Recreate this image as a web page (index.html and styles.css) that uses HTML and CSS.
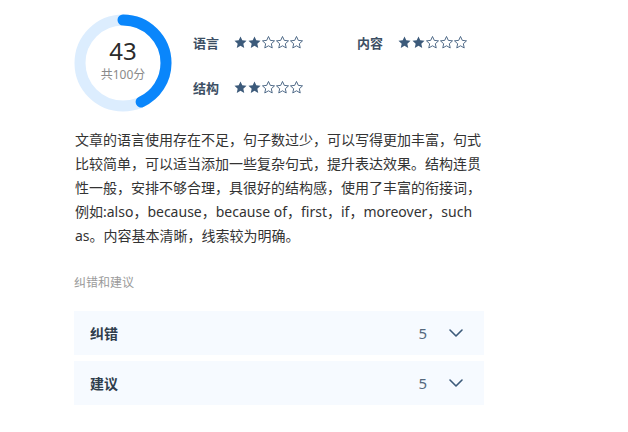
FILE: index.html
```html
<!DOCTYPE html>
<html lang="zh-CN">
<head>
<meta charset="utf-8">
<link rel="stylesheet" href="styles.css">
</head>
<body>
<svg width="0" height="0" class="defs">
  <defs>
    <path id="star" d="M12 1.8l3 6.6 7.2.8-5.4 4.9 1.5 7.1L12 17.6l-6.3 3.6 1.5-7.1L1.8 9.2 9 8.4z"/>
  </defs>
</svg>
<div class="page">
  <div class="top">
    <div class="score">
      <svg class="ring" width="98" height="98" viewBox="0 0 98 98">
        <circle cx="49" cy="49" r="43" fill="none" stroke="#dcedfe" stroke-width="11"/>
        <circle cx="49" cy="49" r="43" fill="none" stroke="#0a86fb" stroke-width="11" stroke-linecap="round" stroke-dasharray="116.2 400" transform="rotate(-90 49 49)"/>
      </svg>
      <div class="score-text">
        <div class="num">43</div>
        <div class="total">共100分</div>
      </div>
    </div>
    <div class="ratings">
      <div class="rating">
        <span class="label">语言</span>
        <span class="stars">
          <svg viewBox="1 1 22 22" class="on"><use href="#star"/></svg><svg viewBox="1 1 22 22" class="on"><use href="#star"/></svg><svg viewBox="1 1 22 22" class="off"><use href="#star"/></svg><svg viewBox="1 1 22 22" class="off"><use href="#star"/></svg><svg viewBox="1 1 22 22" class="off"><use href="#star"/></svg>
        </span>
      </div>
      <div class="rating">
        <span class="label">内容</span>
        <span class="stars">
          <svg viewBox="1 1 22 22" class="on"><use href="#star"/></svg><svg viewBox="1 1 22 22" class="on"><use href="#star"/></svg><svg viewBox="1 1 22 22" class="off"><use href="#star"/></svg><svg viewBox="1 1 22 22" class="off"><use href="#star"/></svg><svg viewBox="1 1 22 22" class="off"><use href="#star"/></svg>
        </span>
      </div>
      <div class="rating">
        <span class="label">结构</span>
        <span class="stars">
          <svg viewBox="1 1 22 22" class="on"><use href="#star"/></svg><svg viewBox="1 1 22 22" class="on"><use href="#star"/></svg><svg viewBox="1 1 22 22" class="off"><use href="#star"/></svg><svg viewBox="1 1 22 22" class="off"><use href="#star"/></svg><svg viewBox="1 1 22 22" class="off"><use href="#star"/></svg>
        </span>
      </div>
    </div>
  </div>
  <p class="comment">文章的语言使用存在不足，句子数过少，可以写得更加丰富，句式比较简单，可以适当添加一些复杂句式，提升表达效果。结构连贯性一般，安排不够合理，具很好的结构感，使用了丰富的衔接词，例如:also，because，because of，first，if，moreover，such as。内容基本清晰，线索较为明确。</p>
  <div class="section-title">纠错和建议</div>
  <div class="panels">
    <div class="panel">
      <span class="panel-name">纠错</span>
      <span class="panel-count">5</span>
      <svg class="chev" width="14" height="8" viewBox="0 0 14 8"><path d="M1 1l6 6 6-6" fill="none" stroke="#3c5a7a" stroke-width="1.6" stroke-linecap="round" stroke-linejoin="round"/></svg>
    </div>
    <div class="panel">
      <span class="panel-name">建议</span>
      <span class="panel-count">5</span>
      <svg class="chev" width="14" height="8" viewBox="0 0 14 8"><path d="M1 1l6 6 6-6" fill="none" stroke="#3c5a7a" stroke-width="1.6" stroke-linecap="round" stroke-linejoin="round"/></svg>
    </div>
  </div>
</div>
</body>
</html>
```

FILE: styles.css
```css
html, body {
  margin: 0;
  padding: 0;
  background: #ffffff;
}
body {
  font-family: "Noto Sans", "Noto Sans CJK SC", sans-serif;
  color: #333333;
}
.defs {
  position: absolute;
  width: 0;
  height: 0;
}
.page {
  margin-left: 74px;
  width: 412px;
  padding-top: 14px;
}
.top {
  display: flex;
  align-items: flex-start;
}
.score {
  position: relative;
  width: 98px;
  height: 98px;
  flex: none;
}
.ring {
  display: block;
}
.score-text {
  position: absolute;
  inset: 0;
  display: flex;
  flex-direction: column;
  align-items: center;
  justify-content: center;
}
.num {
  font-size: 24px;
  line-height: 28px;
  color: #2b2b2b;
  margin-top: -6px;
}
.total {
  font-size: 12px;
  line-height: 18px;
  color: #8a8a8a;
  margin-top: 1px;
}
.ratings {
  margin-left: 21px;
  padding-top: 16px;
  display: grid;
  grid-template-columns: 164px auto;
  row-gap: 21px;
}
.rating {
  display: flex;
  align-items: center;
  height: 24px;
}
.label {
  width: 41px;
  font-size: 13px;
  font-weight: 700;
  color: #3d4f64;
}
.stars {
  display: flex;
  gap: 1px;
}
.stars svg {
  width: 13px;
  height: 13px;
  overflow: visible;
}
.stars .on {
  fill: #3c5a7a;
}
.stars .off {
  fill: none;
  stroke: #3c5a7a;
  stroke-width: 1.5;
}
.comment {
  margin: 16px 0 0 1px;
  font-size: 14px;
  line-height: 24px;
  color: #333333;
}
.section-title {
  margin-top: 26px;
  font-size: 12px;
  line-height: 18px;
  color: #9a9a9a;
}
.panels {
  margin-top: 19px;
  width: 410px;
  display: flex;
  flex-direction: column;
  gap: 6px;
}
.panel {
  height: 44px;
  background: #f6faff;
  display: flex;
  align-items: center;
  padding: 0 21px 0 16px;
}
.panel-name {
  flex: 1;
  font-size: 14px;
  font-weight: 700;
  color: #2f3d4c;
}
.panel-count {
  font-size: 15px;
  color: #55687d;
  margin-right: 22px;
}
.chev {
  display: block;
}
```
